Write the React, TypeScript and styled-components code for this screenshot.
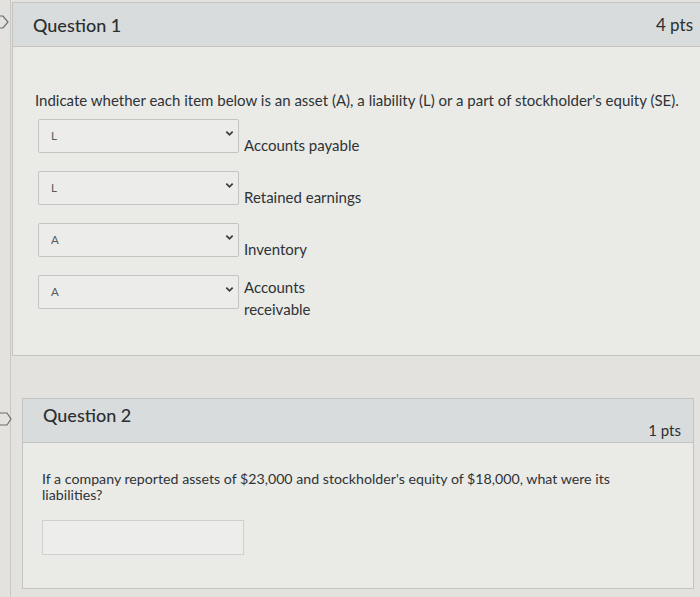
import React from 'react';
import styled, { createGlobalStyle } from 'styled-components';

const GlobalStyle = createGlobalStyle`
  html, body {
    margin: 0;
    padding: 0;
    width: 700px;
    height: 597px;
    overflow: hidden;
    background: #e3e2de;
    font-family: Lato, 'Open Sans', 'Liberation Sans', sans-serif;
    color: #2f3437;
  }
`;

const Page = styled.div`
  position: relative;
  display: flex;
  flex-direction: column;
  height: 597px;
  padding-top: 2px;
  box-sizing: border-box;
  border-left: 1px solid #c9c8c3;
  margin-left: 10px;
`;

const Card = styled.section<{ $indent: number; $right: number }>`
  position: relative;
  margin-left: ${({ $indent }) => $indent}px;
  margin-right: ${({ $right }) => $right}px;
  border: 1px solid #c3c4c2;
  background: #eaeae7;
`;

const Header = styled.header<{ $ptsOffset: number }>`
  display: flex;
  align-items: center;
  justify-content: space-between;
  height: 43px;
  padding: 0 6px 0 20px;
  background: #d9dcdc;
  border-bottom: 1px solid #c3c4c2;

  span {
    transform: translateY(${({ $ptsOffset }) => $ptsOffset}px);
  }
`;

const Title = styled.h2`
  margin: 0;
  font-size: 18px;
  font-weight: 500;
  color: #2b2f31;
`;

const Points = styled.span`
  font-size: 17px;
  color: #2b2f31;
`;

const Body = styled.div<{ $height: number }>`
  height: ${({ $height }) => $height}px;
  padding: 44px 0 0 22px;
  box-sizing: border-box;
`;

const Prompt = styled.p<{ $size: number; $max: number }>`
  margin: 0;
  font-size: ${({ $size }) => $size}px;
  line-height: 1.15;
  color: #2e3336;
  max-width: ${({ $max }) => $max}px;
`;

const Matches = styled.div`
  display: flex;
  flex-direction: column;
  gap: 15px;
  margin-top: 8px;
  padding-left: 3px;
`;

const MatchRow = styled.div`
  display: flex;
  align-items: flex-start;
`;

const Select = styled.div`
  display: flex;
  align-items: center;
  justify-content: space-between;
  width: 201px;
  height: 34px;
  box-sizing: border-box;
  padding: 0 4px 0 12px;
  border: 1px solid #c4c5c3;
  border-radius: 2px;
  background: #ececea;
  font-size: 11.5px;
  color: #555a5c;
`;

const Chevron = styled.svg`
  width: 9px;
  height: 9px;
  margin-top: -4px;
`;

const MatchLabel = styled.span`
  width: 80px;
  margin: 15px 0 0 5px;
  font-size: 15px;
  line-height: 22px;
  color: #2e3336;
  white-space: nowrap;

  &.wrap {
    white-space: normal;
    margin-top: 1px;
  }
`;

const AnswerBox = styled.div`
  width: 200px;
  height: 33px;
  margin-top: 16px;
  border: 1px solid #cfd0ce;
  background: #ededeb;
`;

const Flag = styled.svg<{ $top: number }>`
  position: absolute;
  left: -12px;
  top: ${({ $top }) => $top}px;
  width: 14px;
  height: 16px;
`;

const ChevronIcon = () => (
  <Chevron viewBox="0 0 10 10">
    <path d="M1.5 3 L5 6.5 L8.5 3" fill="none" stroke="#3a3f42" strokeWidth="2" />
  </Chevron>
);

const matches = [
  { value: 'L', label: 'Accounts payable' },
  { value: 'L', label: 'Retained earnings' },
  { value: 'A', label: 'Inventory' },
  { value: 'A', label: 'Accounts receivable', wrap: true },
];

export default function App() {
  return (
    <>
      <GlobalStyle />
      <Page>
        <Flag $top={14} viewBox="0 0 14 16">
          <path d="M-2 2 H4 L9 8 L4 14 H-2" fill="none" stroke="#6b6e70" strokeWidth="1.2" />
        </Flag>
        <Card $indent={1} $right={-20}>
          <Header $ptsOffset={0}>
            <Title>Question 1</Title>
            <Points style={{ marginRight: 20 }}>4 pts</Points>
          </Header>
          <Body $height={308}>
            <Prompt $size={15} $max={680} style={{ lineHeight: 1.3 }}>
              Indicate whether each item below is an asset (A), a liability (L) or a part of
              stockholder's equity (SE).
            </Prompt>
            <Matches>
              {matches.map((m) => (
                <MatchRow key={m.label}>
                  <Select>
                    {m.value}
                    <ChevronIcon />
                  </Select>
                  <MatchLabel className={m.wrap ? 'wrap' : undefined}>{m.label}</MatchLabel>
                </MatchRow>
              ))}
            </Matches>
          </Body>
        </Card>
        <div style={{ height: 42 }} />
        <Card $indent={11} $right={6}>
          <Flag $top={12} viewBox="0 0 14 16" style={{ left: -24 }}>
            <path d="M0 2 H8 L12 8 L8 14 H0" fill="none" stroke="#6b6e70" strokeWidth="1.2" />
          </Flag>
          <Header $ptsOffset={9}>
            <Title style={{ transform: 'translateY(-6px)' }}>Question 2</Title>
            <Points style={{ fontSize: 15, marginRight: 6 }}>1 pts</Points>
          </Header>
          <Body $height={145} style={{ paddingLeft: 19, paddingTop: 28 }}>
            <Prompt $size={14.2} $max={600}>
              If a company reported assets of $23,000 and stockholder's equity of $18,000, what
              were its liabilities?
            </Prompt>
            <AnswerBox />
          </Body>
        </Card>
      </Page>
    </>
  );
}
